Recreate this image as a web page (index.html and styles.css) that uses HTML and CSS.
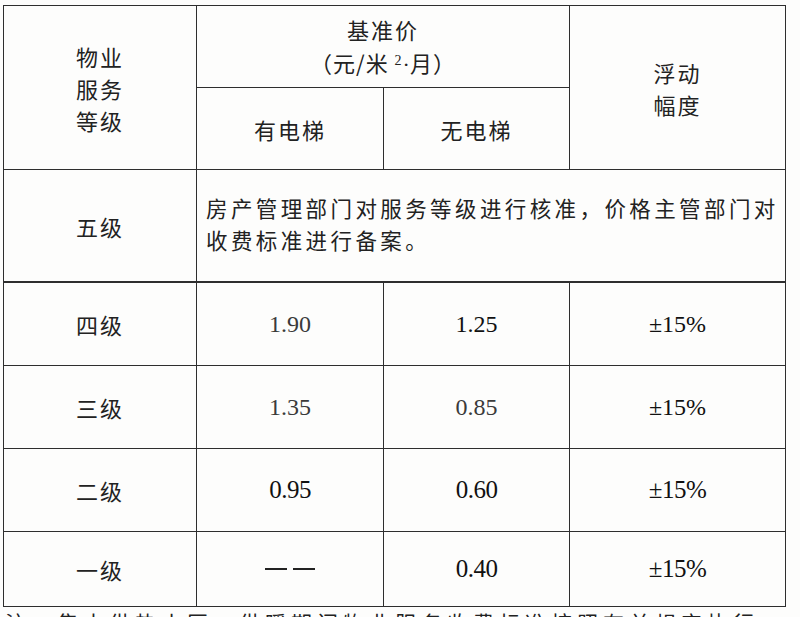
FILE: index.html
```html
<!DOCTYPE html>
<html lang="zh">
<head>
<meta charset="utf-8">
<title>物业服务收费标准</title>
<link rel="stylesheet" href="styles.css">
</head>
<body>
<table class="fee">
  <colgroup>
    <col class="c1"><col class="c2"><col class="c3"><col class="c4">
  </colgroup>
  <tr class="h1">
    <td rowspan="2" class="zh stack">物业<br>服务<br>等级</td>
    <td colspan="2" class="zh stack base">基准价<br><span class="unit">（元/米 <sup>2</sup><span class="dot">·</span>月）</span></td>
    <td rowspan="2" class="zh stack">浮动<br>幅度</td>
  </tr>
  <tr class="h2">
    <td class="zh">有电梯</td>
    <td class="zh">无电梯</td>
  </tr>
  <tr class="r5">
    <td class="zh">五级</td>
    <td colspan="3" class="zh note">房产管理部门对服务等级进行核准，价格主管部门对收费标准进行备案。</td>
  </tr>
  <tr class="r">
    <td class="zh">四级</td>
    <td class="num light">1.90</td>
    <td class="num">1.25</td>
    <td class="num">±15%</td>
  </tr>
  <tr class="r">
    <td class="zh">三级</td>
    <td class="num light">1.35</td>
    <td class="num light">0.85</td>
    <td class="num">±15%</td>
  </tr>
  <tr class="r">
    <td class="zh">二级</td>
    <td class="num narrow">0.95</td>
    <td class="num narrow">0.60</td>
    <td class="num narrow">±15%</td>
  </tr>
  <tr class="r last">
    <td class="zh">一级</td>
    <td class="num dash"><span class="bar"></span><span class="bar"></span></td>
    <td class="num narrow">0.40</td>
    <td class="num narrow">±15%</td>
  </tr>
</table>
<p class="foot">注：集中供热小区，供暖期间物业服务收费标准按照有关规定执行。</p>
</body>
</html>
```

FILE: styles.css
```css
html, body {
  margin: 0;
  padding: 0;
  overflow: hidden;
  background: #fdfdfc;
}

body {
  padding: 5px 0 0 3px;
  color: #1c1c1c;
}

.fee {
  border-collapse: collapse;
  table-layout: fixed;
  width: 782px;
}

.c1 { width: 193px; }
.c2 { width: 187px; }
.c3 { width: 186px; }
.c4 { width: 216px; }

.fee td {
  border: 1.5px solid #2e2e2e;
  padding: 0;
  text-align: center;
  vertical-align: middle;
}

.zh {
  font-family: "Noto Sans CJK SC", "Noto Sans", sans-serif;
  font-size: 22px;
  letter-spacing: 2px;
  font-weight: 400;
  color: #222;
}

.stack {
  line-height: 32px;
}

.base {
  line-height: 33px;
}

.unit {
  letter-spacing: 1px;
}

.unit sup {
  font-family: "Liberation Serif", serif;
  font-size: 14px;
  line-height: 0;
  vertical-align: 7px;
}

.unit .dot {
  font-family: "Liberation Serif", serif;
  letter-spacing: 0;
}

.h1 td { height: 81px; }
.h2 td { height: 81px; }

.r5 td { height: 107px; }
.r5 td.note {
  text-align: left;
  padding: 0 4px 4px 9px;
  line-height: 32px;
  letter-spacing: 3.4px;
  font-size: 21.5px;
}
.r5 td { border-bottom-width: 2px; }

.r td { height: 82px; }
.r.last td { height: 74px; }

.num {
  font-family: "Liberation Serif", "Times New Roman", serif;
  font-size: 24px;
  color: #111;
  letter-spacing: 0;
}

.num.light {
  color: #3a3a3a;
}

.num.narrow {
  font-size: 25px;
  letter-spacing: -0.5px;
}

.dash {
  font-size: 0;
}

.bar {
  display: inline-block;
  width: 22px;
  height: 1.5px;
  background: #222;
  margin: 0 3px;
  vertical-align: middle;
}

.foot {
  margin: 3px 0 0 2px;
  font-family: "Noto Sans CJK SC", sans-serif;
  font-size: 21px;
  letter-spacing: 5px;
  white-space: nowrap;
  color: #222;
  line-height: 24px;
}
```
